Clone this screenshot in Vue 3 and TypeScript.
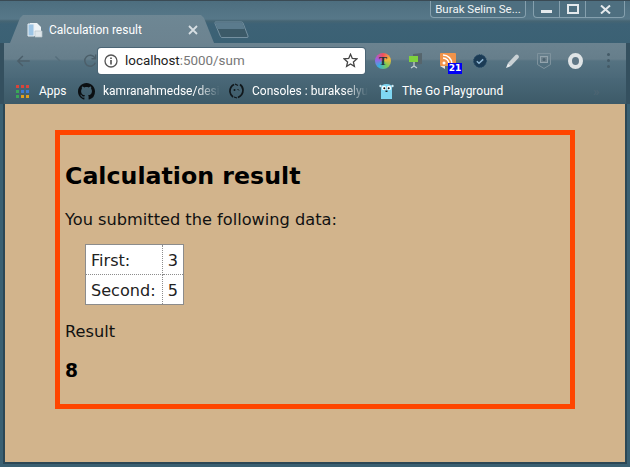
<script setup lang="ts">
const profileName = "Burak Selim Se...";
const rows = [
  { label: "First:", value: 3 },
  { label: "Second:", value: 5 },
];
const appColors = [
  "#d9443a", "#d9443a", "#d9443a",
  "#3aa757", "#3a7bd5", "#3a7bd5",
  "#3aa757", "#e0a020", "#e0a020",
];
</script>

<template>
  <div class="window">
    <header class="strip">
      <div class="titlebar">
        <div class="tabs">
          <div class="tab">
            <svg class="tabicon" width="16" height="16" viewBox="0 0 16 16">
              <path d="M3 1h7l4 4v9H3z" fill="#eef3f6" />
              <path d="M1 2h6v12H1z" fill="#9cc4e4" stroke="#e8eef2" />
              <path d="M8 9h7v6H8z" fill="#dfe6ea" stroke="#b8c4cb" stroke-width=".7" />
            </svg>
            <span class="tabtitle">Calculation result</span>
            <svg class="tabclose" width="10" height="10" viewBox="0 0 10 10">
              <path d="M1 1l8 8M9 1l-8 8" stroke="#d7dfe3" stroke-width="1.8" />
            </svg>
          </div>
          <svg class="newtab" width="36" height="18" viewBox="0 0 36 18">
            <path d="M1.5 1h26q1 0 1.5 1l5 13q.5 1.500-1 1.500H8q-1 0-1.500-1l-5.500-13q-.3-1.500.5-1.500z" fill="#3c5a68" stroke="#7590a0" />
            <path d="M1.500 1.500h26q1 0 1.300.8l1.800 5.700H3.800L1.300 2.500q-.2-1 .2-1z" fill="#5b7b8d" />
          </svg>
        </div>
        <div class="controls">
          <div class="profile">{{ profileName }}</div>
          <div class="winbtns">
            <span class="winbtn"><i class="minimize"></i></span>
            <span class="winbtn mid"><i class="maximize"></i></span>
            <span class="winbtn close">
              <svg width="11" height="9" viewBox="0 0 11 9"><path d="M1 .5l9 8M10 .5l-9 8" stroke="#e4e9ec" stroke-width="2" /></svg>
            </span>
          </div>
        </div>
      </div>
    </header>

    <div class="toolbar">
      <div class="navs">
        <svg width="16" height="14" viewBox="0 0 16 14"><path d="M15 7H2M7.500 1.500L2 7l5.500 5.500" fill="none" stroke="#4c5f6a" stroke-width="1.600" /></svg>
        <svg class="forward" width="16" height="14" viewBox="0 0 16 14"><path d="M7 2l5 5" fill="none" stroke="#566e7b" stroke-width="1.600" /></svg>
        <svg width="16" height="16" viewBox="0 0 16 16"><path d="M13.500 10A6 6 0 1 1 13 4.500M13.800 1v4.500H9.300" fill="none" stroke="#4c5f6a" stroke-width="1.600" /></svg>
      </div>
      <div class="omnibox">
        <svg width="14" height="14" viewBox="0 0 14 14">
          <circle cx="7" cy="7" r="6" fill="none" stroke="#555" stroke-width="1.300" />
          <path d="M7 6v4.500M7 3.400v1.500" stroke="#444" stroke-width="1.500" />
        </svg>
        <span class="url">localhost<span class="urlrest">:5000/sum</span></span>
        <svg class="star" width="15" height="15" viewBox="0 0 15 15">
          <path d="M7.500 1.300l1.800 4.200 4.500.4-3.400 3 1 4.400-3.900-2.300-3.900 2.300 1-4.400-3.400-3 4.500-.4z" fill="none" stroke="#444" stroke-width="1.300" />
        </svg>
      </div>
      <div class="extensions">
        <span class="ext ext-t"><b>T</b></span>
        <svg class="ext monitor" width="15" height="16" viewBox="0 0 15 16">
          <path d="M5 1l9-1v11l-9 1z" fill="#56656c" />
          <path d="M1 3h9v6H1z" fill="#7fd23e" />
          <path d="M6 9v4M3 15l3-2 3 2" fill="none" stroke="#c3cdd1" stroke-width="1.300" />
        </svg>
        <span class="ext rss">
          <svg width="16" height="16" viewBox="0 0 16 16">
            <rect y="0" width="16" height="13" rx="1" fill="#f0934a" />
            <path d="M0 13h5v3z" fill="#e8e2da" />
            <circle cx="4" cy="10" r="1.500" fill="#fff" />
            <path d="M3 5a6 6 0 0 1 6 6M3 2a9 9 0 0 1 9 9" fill="none" stroke="#fff" stroke-width="1.500" />
          </svg>
          <span class="badge">21</span>
        </span>
        <svg class="ext gear" width="14" height="14" viewBox="0 0 14 14">
          <circle cx="7" cy="7" r="6.300" fill="#1b3b55" stroke="#1d4260" stroke-dasharray="1.500 1" />
          <path d="M3.800 7.200l2.200 2 4.200-3.800" fill="none" stroke="#8fb7d4" stroke-width="1.500" />
        </svg>
        <svg class="ext pen" width="16" height="16" viewBox="0 0 16 16">
          <path d="M4 10L11.500 2q1.500-1 3 .5 1 1.500 0 2.500L7 13z" fill="#c9d1d5" />
          <path d="M4 10l3 3-5 2z" fill="#e7ebed" />
        </svg>
        <svg class="ext shield" width="14" height="16" viewBox="0 0 14 16">
          <path d="M.5.500h13v11L7 15.500.5 11.500z" fill="none" stroke="#7e929d" />
          <rect x="3.500" y="3.500" width="7" height="6" fill="#6f828d" stroke="#93a4ad" />
          <circle cx="7" cy="6.500" r="1.500" fill="#4d6370" />
        </svg>
        <span class="ext ring"></span>
        <span class="ext dots"><i></i><i></i><i></i></span>
      </div>
    </div>

    <nav class="bookmarks">
      <div class="bookmark apps">
        <span class="gridicon">
          <i v-for="(c, i) in appColors" :key="i" :style="{ background: c }"></i>
        </span>
        <span>Apps</span>
      </div>
      <div class="bookmark gh">
        <svg width="17" height="17" viewBox="0 0 16 16">
          <path fill="#0b0f12" d="M8 0C3.580 0 0 3.580 0 8c0 3.540 2.290 6.530 5.470 7.590.4.070.55-.17.55-.38 0-.19-.01-.82-.01-1.490-2.010.37-2.530-.49-2.690-.94-.09-.23-.48-.94-.82-1.130-.28-.15-.68-.52-.01-.53.630-.01 1.080.58 1.230.82.720 1.210 1.870.870 2.330.66.070-.52.280-.87.510-1.070-1.780-.2-3.640-.89-3.640-3.950 0-.87.310-1.590.820-2.150-.08-.2-.36-1.020.08-2.120 0 0 .67-.21 2.200.82.640-.18 1.320-.27 2-.27s1.360.09 2 .27c1.530-1.040 2.200-.82 2.200-.82.44 1.100.16 1.920.08 2.120.51.560.82 1.270.82 2.150 0 3.070-1.870 3.750-3.650 3.950.29.250.54.730.54 1.480 0 1.070-.01 1.930-.01 2.200 0 .21.150.46.550.38A8.010 8.010 0 0 0 16 8c0-4.420-3.580-8-8-8z" />
        </svg>
        <span class="fade">kamranahmedse/desi</span>
      </div>
      <div class="bookmark cons">
        <svg width="15" height="16" viewBox="0 0 15 16">
          <path d="M5 1.500C2 3 .8 6 1 9c.2 2 1 3.500 3 5M9 14.500c3-1.500 5-4.500 5-7.500 0-2-1-4-3-5.500" fill="none" stroke="#10171b" stroke-width="1.700" />
          <path d="M6 1l3 1.500M5 14l3 1" stroke="#10171b" stroke-width="1.300" />
          <circle cx="5.500" cy="7" r="1" fill="#10171b" />
          <path d="M8.500 6l1.500 1.500" stroke="#10171b" />
        </svg>
        <span class="fade">Consoles : burakselyu</span>
      </div>
      <div class="bookmark go">
        <svg width="15" height="17" viewBox="0 0 15 17">
          <path d="M2 4.500Q2 1 7.500 1T13 4.500V16H2z" fill="#7fd6f2" />
          <circle cx="1.500" cy="3" r="1.200" fill="#cfeaf4" />
          <circle cx="13.500" cy="3" r="1.200" fill="#cfeaf4" />
          <circle cx="5" cy="5" r="2.200" fill="#fff" />
          <circle cx="10" cy="5" r="2.200" fill="#fff" />
          <circle cx="5.300" cy="5.200" r="1" fill="#111" />
          <circle cx="9.700" cy="5.200" r="1" fill="#111" />
          <path d="M6.500 7.500h2v1.500h-2z" fill="#222" />
        </svg>
        <span>The Go Playground</span>
      </div>
      <span class="more">»</span>
    </nav>

    <main class="page">
      <section class="card">
        <h1>Calculation result</h1>
        <p class="intro">You submitted the following data:</p>
        <table class="data">
          <tbody>
            <tr v-for="row in rows" :key="row.label">
              <td>{{ row.label }}</td>
              <td>{{ row.value }}</td>
            </tr>
          </tbody>
        </table>
        <p class="result">Result</p>
        <h3>8</h3>
      </section>
    </main>
  </div>
</template>

<style>
html, body { margin: 0; background: #3a6072; }
</style>

<style scoped>
.window {
  width: 630px;
  height: 467px;
  display: flex;
  flex-direction: column;
  overflow: hidden;
  background: #3a6072;
  font-family: Roboto, "Open Sans", sans-serif;
}
.strip {
  height: 43px;
  flex: none;
  box-sizing: border-box;
  border-top: 1px solid #3a4a54;
  background: linear-gradient(#4d6e7f 0, #577889 18px, #466573 20px, #3d6276 23px, #3b6174 43px);
}
.titlebar {
  height: 100%;
  display: flex;
  justify-content: space-between;
  align-items: flex-start;
}
.tabs {
  display: flex;
  align-items: flex-end;
  height: 100%;
  padding-left: 10px;
}
.tab {
  width: 204px;
  height: 28px;
  box-sizing: border-box;
  display: flex;
  align-items: center;
  padding: 1px 16px 0 17px;
  background: linear-gradient(#6e8794, #6c8390);
  clip-path: polygon(0 100%, 10px 3px, 13px 0, 191px 0, 194px 3px, 100% 100%);
}
.tabicon { flex: none; margin-right: 6px; }
.tabtitle {
  flex: 1;
  color: #fff;
  font-size: 12px;
  white-space: nowrap;
}
.newtab { margin-bottom: 4px; }
.controls {
  display: flex;
  gap: 7px;
  padding-right: 5px;
}
.profile, .winbtns {
  height: 17px;
  box-sizing: border-box;
  border: 1px solid #85a0ae;
  border-top: 0;
  border-radius: 0 0 4px 4px;
  background: #4e6f80;
}
.profile {
  width: 96px;
  color: #f2f5f6;
  font-size: 11.500px;
  line-height: 16px;
  text-align: center;
  white-space: nowrap;
}
.winbtns { display: flex; width: 92px; }
.winbtn {
  display: flex;
  align-items: center;
  justify-content: center;
  width: 25px;
}
.winbtn.mid { border-inline: 1px solid #85a0ae; }
.winbtn.close { flex: 1; }
.minimize {
  width: 11px;
  height: 3px;
  margin-top: 5px;
  background: #e4e9ec;
}
.maximize {
  width: 8px;
  height: 6px;
  border: 2px solid #e4e9ec;
}
.toolbar {
  height: 35px;
  flex: none;
  display: flex;
  align-items: center;
  box-sizing: border-box;
  padding: 0 0 0 12px;
  background: linear-gradient(#6b8390 0, #667e8b 16px, #557281 18px, #4b6979 35px);
  border-inline: 4px solid #34505f;
}
.navs {
  width: 82px;
  flex: none;
  display: flex;
  align-items: center;
  gap: 18px;
}
.forward { margin-right: 2px; }
.omnibox {
  width: 267px;
  height: 26px;
  flex: none;
  box-sizing: border-box;
  display: flex;
  align-items: center;
  padding: 0 7px 0 6px;
  background: #fff;
  border-radius: 3px;
  box-shadow: 0 0 0 1px #4b6575;
}
.url {
  flex: 1;
  margin-left: 7px;
  color: #222;
  font-size: 13.400px;
}
.urlrest { color: #777; }
.extensions {
  display: flex;
  align-items: center;
  gap: 17px;
  margin-left: 10px;
  flex: 1;
}
.ext { flex: none; display: block; }
.ext-t {
  width: 16px;
  height: 16px;
  border-radius: 50%;
  background: conic-gradient(#f04f5b, #f5b73c, #79c955, #35b0e0, #a25ee0, #f04f5b);
  color: #24323a;
  font: 700 12px/16px "Liberation Serif", serif;
  text-align: center;
}
.rss { position: relative; width: 16px; height: 16px; }
.rss svg { display: block; }
.badge {
  position: absolute;
  left: 8px;
  top: 10px;
  width: 14px;
  height: 11px;
  background: #0000f5;
  color: #fff;
  font: 700 9px/11px "DejaVu Sans", sans-serif;
  text-align: center;
}
.ring {
  width: 7px;
  height: 8px;
  border: 4.500px solid #dfe4e6;
  border-radius: 50%;
  background: #5f7786;
  box-sizing: content-box;
}
.dots {
  display: flex;
  flex-direction: column;
  gap: 3px;
  margin-left: 7px;
}
.dots i {
  width: 3px;
  height: 3px;
  background: #445a67;
  border-radius: 50%;
}
.bookmarks {
  height: 26px;
  flex: none;
  display: flex;
  align-items: center;
  box-sizing: border-box;
  background: linear-gradient(#4a6878, #3d5a68);
  color: #fff;
  font-size: 12px;
  padding-left: 12px;
  border-inline: 4px solid #34505f;
}
.bookmark {
  display: flex;
  align-items: center;
  white-space: nowrap;
  gap: 8px;
  flex: none;
}
.apps { gap: 10px; width: 62px; }
.gh { width: 151px; }
.cons { width: 150px; gap: 8px; }
.go { width: 190px; gap: 8px; }
.gridicon {
  display: grid;
  grid-template-columns: repeat(3, 3px);
  grid-auto-rows: 3px;
  gap: 2px;
}
.fade {
  display: block;
  -webkit-mask-image: linear-gradient(90deg, #000 80%, transparent);
  mask-image: linear-gradient(90deg, #000 80%, transparent);
}
.more { color: #4d6573; font-size: 13px; font-weight: 700; margin-left: 24px; }
.page {
  flex: 1;
  min-height: 0;
  box-sizing: border-box;
  margin: 0 3px 3px;
  padding: 26px 48px 0 50px;
  background: #d2b48c;
  border: 2px solid #2b4755;
  border-top: 0;
  font-family: "DejaVu Sans", sans-serif;
  color: #000;
}
.card {
  width: 520px;
  height: 279px;
  box-sizing: border-box;
  border: 5px solid #ff4500;
  padding: 0 5px;
}
h1 {
  margin: 26px 0 0;
  font-size: 23.700px;
  line-height: 30px;
  font-weight: 700;
}
p {
  font-size: 16.200px;
  line-height: 19px;
  color: #111;
}
.intro { margin: 19px 0 0; }
.result { margin: 17px 0 0; }
.data {
  margin: 15px 0 0 20px;
  border-collapse: collapse;
  background: #fff;
  border: 1px solid #8c8c8c;
  color: #222;
  font-size: 16.100px;
  line-height: 19px;
}
td {
  padding: 6px 5px 4px 5px;
  border: 1px dotted #8c8c8c;
}
td:first-child { padding-right: 6px; }
h3 {
  margin: 19px 0 0;
  font-size: 18.700px;
  line-height: 22px;
  font-weight: 700;
}
</style>
